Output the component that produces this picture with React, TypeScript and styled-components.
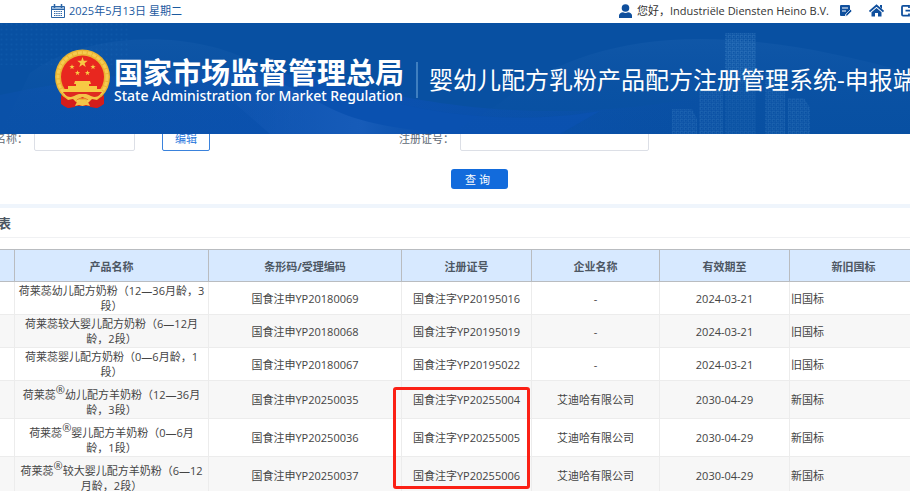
import React from 'react';
import styled, { createGlobalStyle } from 'styled-components';

const sans = `'Open Sans', 'Noto Sans CJK SC', sans-serif`;

const GlobalStyle = createGlobalStyle`
  *, *::before, *::after { box-sizing: border-box; }
  body { margin: 0; background: #fff; color: #444; font: 11px/15px ${sans}; }
  button, input { font: inherit; }
`;

const Page = styled.div`
  height: 100vh;
  overflow: hidden;
`;

const TopBar = styled.header`
  display: flex;
  justify-content: space-between;
  align-items: center;
  height: 23px;
  padding: 0 0 2px 51px;
  overflow: hidden;
  color: #333;
`;

const Today = styled.time`
  display: flex;
  align-items: center;
  gap: 4px;
  line-height: 20px;
  color: #1c5a9f;
`;

const UserArea = styled.div`
  display: flex;
  align-items: center;
  flex: none;
  line-height: 20px;
  white-space: nowrap;
  margin-right: -5px;
`;

const UserName = styled.span`
  margin: 0 10px 0 5px;
`;

const IconLink = styled.a`
  display: flex;
  margin-right: 17px;
  &:last-child { margin-right: 0; }
`;

const Banner = styled.div`
  position: relative;
  display: flex;
  align-items: center;
  height: 111px;
  padding-left: 54px;
  overflow: hidden;
  white-space: nowrap;
  color: #fff;
  background: #0850a2;
`;

const Backdrop = styled.svg`
  position: absolute;
  inset: 0;
  width: 100%;
  height: 100%;
`;

const Brand = styled.div`
  position: relative;
  display: flex;
  align-items: center;
  flex: none;
  gap: 3px;
`;

const BrandText = styled.div`
  padding-top: 4px;
`;

const BrandName = styled.div`
  font-size: 29px;
  font-weight: 700;
  line-height: 30px;
`;

const BrandSub = styled.div`
  font: 500 14px/16px 'Noto Sans', sans-serif;
`;

const SystemName = styled.h1`
  position: relative;
  margin: 2px 0 0 12px;
  padding-left: 11px;
  border-left: 2px solid #3f7fc0;
  font-size: 24px;
  font-weight: 400;
  line-height: 36px;
`;

const FilterRow = styled.div`
  display: flex;
  align-items: flex-end;
  height: 17px;
  overflow: hidden;
`;

const Label = styled.label`
  display: flex;
  justify-content: flex-end;
  flex: none;
  width: ${(p: { $w: number }) => p.$w}px;
  padding-bottom: 5px;
  white-space: nowrap;
  color: #606a76;
`;

const Field = styled.input`
  flex: none;
  width: ${(p: { $w: number }) => p.$w}px;
  height: 32px;
  margin-left: 6px;
  border: 1px solid #dcdfe6;
  border-radius: 2px;
`;

const EditButton = styled.button`
  flex: none;
  width: 48px;
  height: 32px;
  margin-left: 27px;
  padding: 7px 0 0;
  border: 1px solid #3a82dc;
  border-radius: 2px;
  background: #fff;
  color: #2a78dc;
`;

const Actions = styled.div`
  display: flex;
  justify-content: center;
  padding: 18px 0 15px 49px;
  border-bottom: 4px solid #eff5fc;
`;

const QueryButton = styled.button`
  width: 57px;
  height: 20px;
  padding: 0 4px 0 0;
  border: 0;
  border-radius: 3px;
  background: #126bdc;
  color: #fff;
`;

const SectionTitle = styled.h2`
  margin: 0 0 11px;
  padding: 5px 0 4px;
  border-bottom: 1px solid #f0f1f3;
  text-indent: -2px;
  font-size: 13px;
  line-height: 20px;
  color: #4d5763;
`;

const TableArea = styled.div`
  position: relative;
  margin-right: -8px;
`;

const Table = styled.table`
  width: 100%;
  table-layout: fixed;
  border-collapse: separate;
  border-spacing: 0;
`;

const Column = styled.col`
  width: ${(p: { $w?: number }) => (p.$w ? `${p.$w}px` : 'auto')};
`;

const HeadCell = styled.th`
  height: 33px;
  padding: 2px 0 0;
  border: solid #b9bcc0;
  border-width: 1px 1px 1px 0;
  background: #d7e9ff;
  color: #4d5763;
`;

const Row = styled.tr`
  height: ${(p: { $tall: boolean }) => (p.$tall ? 38 : 33)}px;
  &:nth-child(even) { background: #f7f7f7; }
`;

const Cell = styled.td`
  padding: 1px;
  border: solid #ececec;
  border-width: 0 1px 1px 0;
  text-align: ${(p: { $left?: boolean }) => (p.$left ? 'left' : 'center')};
`;

const ProductCell = styled(Cell)`
  white-space: pre;
`;

const Mark = styled.span`
  vertical-align: super;
`;

const Highlight = styled.div`
  position: absolute;
  top: 138px;
  left: 393px;
  width: 137px;
  height: 102px;
  border: 3px solid #fb2015;
  border-radius: 3px;
`;

const rows = [
  { product: '幼儿配方奶粉（12—36月龄，3\n段）', marked: false, code: '国食注申YP20180069', cert: '国食注字YP20195016', company: '-', until: '2024-03-21', standard: '旧国标' },
  { product: '较大婴儿配方奶粉（6—12月\n龄，2段）', marked: false, code: '国食注申YP20180068', cert: '国食注字YP20195019', company: '-', until: '2024-03-21', standard: '旧国标' },
  { product: '婴儿配方奶粉（0—6月龄，1\n段）', marked: false, code: '国食注申YP20180067', cert: '国食注字YP20195022', company: '-', until: '2024-03-21', standard: '旧国标' },
  { product: '幼儿配方羊奶粉（12—36月\n龄，3段）', marked: true, code: '国食注申YP20250035', cert: '国食注字YP20255004', company: '艾迪哈有限公司', until: '2030-04-29', standard: '新国标' },
  { product: '婴儿配方羊奶粉（0—6月\n龄，1段）', marked: true, code: '国食注申YP20250036', cert: '国食注字YP20255005', company: '艾迪哈有限公司', until: '2030-04-29', standard: '新国标' },
  { product: '较大婴儿配方羊奶粉（6—12\n月龄，2段）', marked: true, code: '国食注申YP20250037', cert: '国食注字YP20255006', company: '艾迪哈有限公司', until: '2030-04-29', standard: '新国标' },
];

const star = (cx: number, cy: number, r: number) =>
  Array.from({ length: 10 }, (_, i) => {
    const a = (Math.PI / 5) * i - Math.PI / 2;
    const d = i % 2 ? r * 0.4 : r;
    return `${cx + d * Math.cos(a)},${cy + d * Math.sin(a)}`;
  }).join(' ');

const Emblem = () => (
  <svg width="57" height="60" viewBox="0 0 57 60" aria-hidden="true">
    <path d="M9 42 7 54l3 3 4 2 7-2h15l7 2 4-2 3-3-2-12z" fill="#d31d1b" />
    <path d="M11 48l4 4-1 6M46 48l-4 4 1 6" stroke="#a80f12" fill="none" />
    <circle cx="28.5" cy="28" r="27.500" fill="#eab432" />
    <circle cx="28.5" cy="28" r="24.500" fill="none" stroke="#f6cb50" strokeWidth="3" strokeDasharray="4 1" />
    <circle cx="28.5" cy="28" r="21.500" fill="#e8271f" />
    <g fill="#f7c944">
      <polygon points={star(28.5, 13.5, 5.5)} />
      <polygon points={star(18, 18, 2.8)} />
      <polygon points={star(39, 18, 2.8)} />
      <polygon points={star(23.5, 24, 2.8)} />
      <polygon points={star(33.5, 24, 2.8)} />
      <path d="M21 32h15l1 3h-2v2h8v3h5l-1 3H10l-1-3h5v-3h8v-2h-2z" />
    </g>
    <path d="M9 43h39l-5 6-9 2-5.500-3-5.500 3-9-2z" fill="#df2a20" />
    <path d="M11 46c4 3 8 2 11 0l3-1h7l3 1c3 2 7 3 11 0l-4 6c-4 1-7 0-9-2l-4.500-2-4.500 2c-2 2-5 3-9 2z" fill="#f3c548" />
    <path d="M7 46l7 5 5-1 4 4-2 4-7 1-7-4zM50 46l-7 5-5-1-4 4 2 4 7 1 7-4z" fill="#d31d1b" />
    <path d="M21 57c2-5 5-6 7.500-6s5.500 1 7.500 6l-4-1-3.500 1-3.500-1z" fill="#f3c548" />
  </svg>
);

const CalendarIcon = () => (
  <svg width="14" height="14" viewBox="0 0 14 14" aria-hidden="true">
    <path d="M.5 2.500h13v11H.5zM.5 5.500h13" fill="none" stroke="#2a64a6" />
    <path d="M1 3h12v2H1z" fill="#9dbbdc" />
    <path d="M3.500 0v4M10.500 0v4" stroke="#2a64a6" strokeWidth="1.500" />
    <path d="M3 7.500h8M3 9.500h8M3 11.500h8" stroke="#2a64a6" strokeDasharray="1.400 .8" />
  </svg>
);

const UserIcon = () => (
  <svg width="13" height="14" viewBox="0 0 13 14" fill="#0f4f9d" aria-hidden="true">
    <circle cx="6.500" cy="4" r="3.800" />
    <path d="M0 14v-2.500C0 9.500 2 8.500 4 8.300c1.500 1 3.500 1 5 0 2 .2 4 1.200 4 3.200V14z" />
  </svg>
);

const EditIcon = () => (
  <svg width="13" height="13" viewBox="0 0 13 13" aria-hidden="true">
    <path d="M2 1h8q1 0 1 1v4L6 11v1H2q-1 0-1-1V2q0-1 1-1z" fill="#0f4f9d" />
    <path d="M3 4h6M3 7h4" stroke="#fff" />
    <path d="M6.500 12.500l.5-2.500 4.500-4.500 1.500 1.500-4.500 4.500z" fill="#0f4f9d" stroke="#fff" strokeWidth=".6" />
  </svg>
);

const HomeIcon = () => (
  <svg width="15" height="13" viewBox="0 0 15 13" aria-hidden="true">
    <path d="M.5 7.500l7-6 7 6" fill="none" stroke="#0f4f9d" strokeWidth="1.800" />
    <path d="M11 1h2v4l-2-2z" fill="#0f4f9d" />
    <path d="M2.500 8.200l5-4.200 5 4.200V12.500H9V9H6v3.500H2.500z" fill="#0f4f9d" />
  </svg>
);

const LogoutIcon = () => (
  <svg width="14" height="13" viewBox="0 0 14 13" fill="none" stroke="#0f4f9d" strokeWidth="1.800" aria-hidden="true">
    <path d="M8 4V1.900H2q-1 0-1 1v7.700q0 1 1 1h6V9.500M4.500 6.700h8M10 4l3 2.700-3 2.700" />
  </svg>
);

const BannerArt = () => (
  <Backdrop viewBox="0 0 910 111" preserveAspectRatio="xMinYMin slice" aria-hidden="true">
    <defs>
      <pattern id="dots" width="5" height="5" patternUnits="userSpaceOnUse">
        <circle cx="1.500" cy="1.500" r="1" fill="#2c7ccc" />
      </pattern>
      <pattern id="windows" width="4" height="4" patternUnits="userSpaceOnUse">
        <rect x=".5" y=".5" width="2.500" height="2.500" fill="none" stroke="#4f93d2" strokeWidth=".8" />
      </pattern>
      <linearGradient id="sweep" x1="0" x2="1">
        <stop offset="0" stopColor="#0a51a8" />
        <stop offset=".5" stopColor="#0b51b0" />
        <stop offset="1" stopColor="#084fa2" />
      </linearGradient>
      <linearGradient id="arc" x1="0" x2="0" y1="0" y2="1">
        <stop offset="0" stopColor="#1d62b0" stopOpacity=".6" />
        <stop offset="1" stopColor="#0a51a6" stopOpacity=".1" />
      </linearGradient>
      <linearGradient id="fade" x1="1" x2="0">
        <stop offset="0" stopColor="#084fa2" stopOpacity="0" />
        <stop offset=".4" stopColor="#1c60bc" stopOpacity=".7" />
        <stop offset="1" stopColor="#1c60bc" stopOpacity="0" />
      </linearGradient>
    </defs>
    <path d="M0 72C150 40 270 42 350 62S560 105 720 70V111H0z" fill="url(#sweep)" />
    <path d="M300 45C370 80 480 108 600 88L560 111H300z" fill="#0a51b0" />
    <path d="M30 50C90 5 210 5 270 50L330 111H0z" fill="url(#arc)" opacity=".5" />
    <path d="M200 50C270 45 300 70 330 85S400 108 470 111H270z" fill="url(#fade)" />
    <path d="M500 80C580 15 700-10 910 50V111H450z" fill="url(#arc)" opacity=".6" />
    <rect width="130" height="42" fill="url(#dots)" opacity=".15" />
    <g fill="url(#windows)" opacity=".4">
      <path d="M725 10h31v50h-31z" />
      <path d="M725 60h31v51h-31z" opacity=".5" />
      <path d="M699 66h24v45h-24zM765 48h20v63h-20zM788 75h16l6 10v26h-22z" opacity=".7" />
      <path d="M672 86h20l5 10v15h-25z" opacity=".7" />
    </g>
  </Backdrop>
);

export default function App() {
  return (
    <Page>
      <GlobalStyle />
      <TopBar>
        <Today dateTime="2025-05-13"><CalendarIcon />2025年5月13日 星期二</Today>
        <UserArea>
          <UserIcon />
          <UserName>您好，Industriële Diensten Heino B.V.</UserName>
          <IconLink href="#edit" aria-label="修改"><EditIcon /></IconLink>
          <IconLink href="#home" aria-label="首页"><HomeIcon /></IconLink>
          <IconLink href="#logout" aria-label="退出"><LogoutIcon /></IconLink>
        </UserArea>
      </TopBar>
      <Banner>
        <BannerArt />
        <Brand>
          <Emblem />
          <BrandText>
            <BrandName>国家市场监督管理总局</BrandName>
            <BrandSub>State Administration for Market Regulation</BrandSub>
          </BrandText>
        </Brand>
        <SystemName>婴幼儿配方乳粉产品配方注册管理系统-申报端</SystemName>
      </Banner>
      <main>
        <FilterRow>
          <Label $w={28} htmlFor="name">名称：</Label>
          <Field $w={101} id="name" />
          <EditButton type="button">编辑</EditButton>
          <Label $w={244} htmlFor="number">注册证号：</Label>
          <Field $w={189} id="number" />
        </FilterRow>
        <Actions><QueryButton type="button">查 询</QueryButton></Actions>
        <SectionTitle>表</SectionTitle>
        <TableArea>
          <Table>
            <colgroup>
              {[15, 194, 193, 130, 128, 130].map((w, i) => <Column key={i} $w={w} />)}
              <Column />
            </colgroup>
            <thead>
              <tr>
                {['', '产品名称', '条形码/受理编码', '注册证号', '企业名称', '有效期至', '新旧国标'].map((h) => (
                  <HeadCell key={h}>{h}</HeadCell>
                ))}
              </tr>
            </thead>
            <tbody>
              {rows.map((r) => (
                <Row key={r.code} $tall={r.marked}>
                  <Cell />
                  <ProductCell>荷莱蕊{r.marked && <Mark>®</Mark>}{r.product}</ProductCell>
                  <Cell>{r.code}</Cell>
                  <Cell>{r.cert}</Cell>
                  <Cell>{r.company}</Cell>
                  <Cell>{r.until}</Cell>
                  <Cell $left>{r.standard}</Cell>
                </Row>
              ))}
            </tbody>
          </Table>
          <Highlight />
        </TableArea>
      </main>
    </Page>
  );
}
